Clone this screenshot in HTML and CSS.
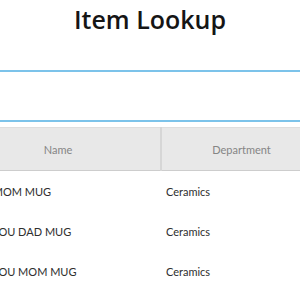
FILE: index.html
```html
<!DOCTYPE html>
<html>
<head>
<title>Item Lookup</title>
<meta charset="utf-8">
<link rel="stylesheet" href="styles.css">
</head>
<body>
	<h1 class="title">Item Lookup</h1>

	<!-- search box -->
	<div class="search">
		<input type="text" class="search-input">
	</div>

	<!-- results, scrolled a little to the right -->
	<div class="results">
		<table class="grid">
			<thead>
				<tr>
					<th class="col-name">Name</th>
					<th class="col-dept">Department</th>
				</tr>
			</thead>
			<tbody>
				<tr><td class="name">SUPER MOM MUG</td><td>Ceramics</td></tr>
				<tr><td class="name">I LOVE YOU DAD MUG</td><td>Ceramics</td></tr>
				<tr><td class="name">I LOVE YOU MOM MUG</td><td>Ceramics</td></tr>
			</tbody>
		</table>
	</div>
</body>
</html>
```

FILE: styles.css
```css
body {
	margin: 0;
	background: #fff;
	font-family: "Open Sans", "Noto Sans", sans-serif;
	overflow: hidden;
}

.title {
	margin: 0;
	height: 38px;
	line-height: 38px;
	text-align: center;
	font-size: 25px;
	font-weight: 600;
	color: #151515;
}

/* search box */
.search {
	margin: 32px -20px 0 -20px;
}

.search-input {
	display: block;
	box-sizing: border-box;
	width: 100%;
	height: 52px;
	margin: 0;
	border: none;
	border-top: 2px solid #7cc3ea;
	border-bottom: 2px solid #7cc3ea;
	background: #fff;
	outline: none;
}

/* results grid */
.results {
	margin-top: 5px;
	overflow: hidden;
}

.grid {
	table-layout: fixed;
	width: 365px;
	border-collapse: collapse;
	margin-left: -44px;
	font-family: Lato, "Open Sans", sans-serif;
	font-size: 11px;
}

.grid th {
	height: 42px;
	padding: 0;
	background: #e8e8e8;
	border-top: 1px solid #dedede;
	border-bottom: 1px solid #cdcdcd;
	color: #858585;
	font-weight: normal;
	text-align: center;
}

.grid .col-name {
	width: 204px;
	border-right: 2px solid #d6d6d6;
}

.grid .col-dept {
	width: 159px;
}

.grid td {
	height: 40px;
	padding: 0 0 0 5px;
	color: #2e2e2e;
	white-space: nowrap;
	overflow: hidden;
}

.grid td.name {
	padding-left: 0;
}
```
